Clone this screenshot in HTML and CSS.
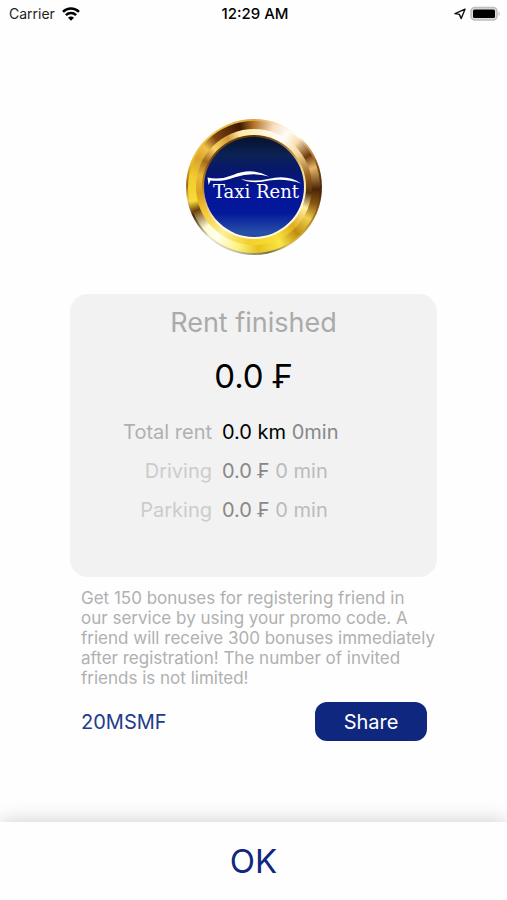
FILE: index.html
```html
<!DOCTYPE html>
<html lang="en">
<head>
<meta charset="utf-8">
<meta name="viewport" content="width=device-width, initial-scale=1">
<title>Taxi Rent</title>
<link rel="stylesheet" href="styles.css">
</head>
<body>
<div class="app">
  <header class="status">
    <div class="status-side">
      <span>Carrier</span>
      <svg class="wifi" width="18" height="14" viewBox="0 0 18 14" aria-hidden="true">
        <path d="M1 4.9 A11.4 11.4 0 0 1 17 4.9" fill="none" stroke="#000" stroke-width="2.5"/>
        <path d="M3.9 8.1 A7.3 7.3 0 0 1 14.1 8.1" fill="none" stroke="#000" stroke-width="2.4"/>
        <path d="M9 13.8 L6 10.8 A4.2 4.2 0 0 1 12 10.8 Z" fill="#000"/>
      </svg>
    </div>
    <time class="clock">12:29 AM</time>
    <div class="status-side status-end">
      <svg width="12" height="12" viewBox="0 0 12 12" aria-hidden="true">
        <path d="M11 1.2 L1 5.6 L5.4 6.4 L7.2 10.6 Z" fill="none" stroke="#111" stroke-width="1.4" stroke-linejoin="round"/>
      </svg>
      <svg width="31" height="16" viewBox="0 0 31 16" aria-hidden="true">
        <rect x="1" y="1.5" width="26" height="12.5" rx="4" fill="#ddd" stroke="#bdbdbd" stroke-width="1.6"/>
        <rect x="3" y="3.5" width="22" height="8.5" rx="1.5" fill="#000"/>
        <path d="M28.6 5.3 Q30.8 7.8 28.6 10.3 Z" fill="#b5b5b5"/>
      </svg>
    </div>
  </header>

  <main class="content">
    <div class="logo">
      <div class="ring ring-middle">
        <div class="ring ring-inner">
          <div class="ring ring-bevel">
            <div class="disc"></div>
          </div>
        </div>
      </div>
      <svg class="logo-front" viewBox="0 0 136 136" role="img" aria-label="Taxi Rent">
        <path d="M21.5 58.6 Q34 61.5 47 56 Q66 48 83 57.5 Q66 52.5 49 58.2 Q37 63 24.5 61.5 L22.6 66 Z" fill="#fff"/>
        <path d="M55 60 Q68 63 82 60 Q102 55 115 64.5 Q99 59 83 61.6 Q66 65.5 55 60 Z" fill="#fff"/>
        <text class="logo-text" x="70" y="79" text-anchor="middle">Taxi Rent</text>
      </svg>
    </div>

    <section class="card">
      <h1 class="title">Rent finished</h1>
      <p class="total">0.0 ₣</p>
      <table class="details">
        <tbody>
          <tr class="main-row"><th scope="row">Total rent</th><td><span class="value">0.0 km</span> 0min</td></tr>
          <tr><th scope="row">Driving</th><td><span class="value">0.0 ₣</span> 0 min</td></tr>
          <tr><th scope="row">Parking</th><td><span class="value">0.0 ₣</span> 0 min</td></tr>
        </tbody>
      </table>
    </section>

    <section class="promo">
      <p class="promo-text">Get 150 bonuses for registering friend in<br>our service by using your promo code. A<br>friend will receive 300 bonuses immediately<br>after registration! The number of invited<br>friends is not limited!</p>
      <div class="promo-row">
        <span class="code">20MSMF</span>
        <button class="share" type="button">Share</button>
      </div>
    </section>
  </main>

  <footer class="footer"><button class="ok" type="button">OK</button></footer>
</div>
</body>
</html>
```
FILE: styles.css
```css
* {
  box-sizing: border-box;
}

body {
  margin: 0;
  background: #fefefe;
  color: #000;
  font-family: Inter, "Liberation Sans", sans-serif;
}

h1,
p {
  margin: 0;
  font-weight: 400;
}

button {
  border: 0;
  padding: 0;
  font-family: inherit;
  cursor: pointer;
}

.app {
  display: flex;
  flex-direction: column;
  min-height: 100vh;
  overflow: hidden;
}

.status {
  display: flex;
  align-items: center;
  height: 27px;
  padding: 0 6px 0 9px;
  font-size: 14px;
  color: #222;
}

.status-side {
  display: flex;
  flex: 1;
  align-items: center;
  gap: 7px;
}

.status-end {
  justify-content: flex-end;
  gap: 4px;
}

.clock {
  color: #000;
  font-size: 15px;
  font-weight: 500;
}

.content {
  display: flex;
  flex: 1;
  flex-direction: column;
  align-items: center;
  padding: 92px 70px 0;
}

/* Gold badge: nested rings, each with its own metallic sweep */
.logo {
  position: relative;
  flex: none;
  width: 136px;
  height: 136px;
  padding: 2px;
  border-radius: 50%;
  background: conic-gradient(#dca23c, #fff0d8 25deg, #fff 42deg, #d9a65a 52deg, #7a450e 75deg, #452306 95deg, #b98a28 120deg, #d8c050 150deg, #77704a 168deg, #c4bfae 195deg, #eee8c8 222deg, #3a2408 245deg, #f0d060 258deg, #9c6410 272deg, #e8bd2c 290deg, #f0cb50 325deg, #dca23c);
}

.ring {
  width: 100%;
  height: 100%;
  border-radius: 50%;
}

.ring-middle {
  padding: 8px;
  background: conic-gradient(#b5732a, #f7dfc4 18deg, #fffdf8 32deg, #f8deb0 44deg, #6d3b0c 60deg, #e5b668 72deg, #4a2406 92deg, #8a5810 106deg, #f0cf50 120deg, #c18d0e 137deg, #fbe546 155deg, #e8c21c 176deg, #fff37e 195deg, #fffff0 217deg, #fffbd4 230deg, #6d4108 248deg, #f8dc38 257deg, #f2cb2c 280deg, #d9a42c 297deg, #f0c048 309deg, #7b4210 322deg, #3f1a04 347deg, #b5732a);
}

.ring-inner {
  padding: 6px;
  background: conic-gradient(#fff0c0, #fff 30deg, #f8dc98 52deg, #9a611c 78deg, #573008 96deg, #fff0a0 112deg, #e0ae1c 135deg, #f9e03c 155deg, #f2d028 185deg, #fdf0a0 215deg, #f7cd38 240deg, #d9a022 264deg, #e8b93c 282deg, #a4681a 298deg, #f9d564 314deg, #d19a38 332deg, #ffe9a0 345deg, #fff0c0);
}

.ring-bevel {
  padding: 2px;
  background: conic-gradient(#5a3208, #a06a28 35deg, #f5d98c 70deg, #fff8dc 110deg, #fffbe4 225deg, #d39424 265deg, #7a4a18 300deg, #5a3208);
}

.disc {
  height: 100%;
  border-radius: 50%;
  background: linear-gradient(#06122e, #0b2254 18%, #061670 36%, #04159a 55%, #04199a 76%, #2850a8 96%, #234a9c);
}

.logo-front {
  position: absolute;
  inset: 0;
}

.logo-text {
  fill: #fff;
  font-family: "DejaVu Serif", serif;
  font-size: 18px;
}

.card {
  width: 100%;
  min-height: 283px;
  margin-top: 39px;
  padding-top: 12px;
  border-radius: 18px;
  background: #f2f2f2;
  text-align: center;
}

.title {
  color: #aaa;
  font-size: 27px;
  line-height: 34px;
}

.total {
  margin-top: 15px;
  font-size: 33px;
  line-height: 42px;
}

.details {
  width: 100%;
  margin-top: 16px;
  border-collapse: collapse;
  table-layout: fixed;
  color: #bbb;
  font-size: 20px;
  line-height: 39px;
}

.details th {
  width: 142px;
  padding: 0;
  color: #ccc;
  font-weight: 400;
  text-align: right;
}

.details td {
  padding: 0 0 0 10px;
  text-align: left;
}

.details .value {
  color: #888;
}

.details .main-row th {
  color: #b0b0b0;
}

.details .main-row td {
  color: #888;
}

.details .main-row .value {
  color: #000;
}

.promo {
  width: 100%;
  padding: 11px 0 0 11px;
}

.promo-text {
  color: #b0b0b0;
  font-size: 17px;
  line-height: 20px;
}

.promo-row {
  display: flex;
  align-items: center;
  justify-content: space-between;
  margin-top: 14px;
  padding-right: 10px;
}

.code {
  color: #233b8c;
  font-size: 20px;
}

.share {
  width: 112px;
  height: 39px;
  border-radius: 12px;
  background: #10277f;
  color: #fff;
  font-size: 20px;
}

.footer {
  margin-top: 24px;
  background: #fefefe;
  box-shadow: 0 0 20px rgba(0, 0, 0, 0.2);
}

.ok {
  display: block;
  width: 100%;
  height: 78px;
  background: transparent;
  color: #10277f;
  font-size: 33px;
}
```
